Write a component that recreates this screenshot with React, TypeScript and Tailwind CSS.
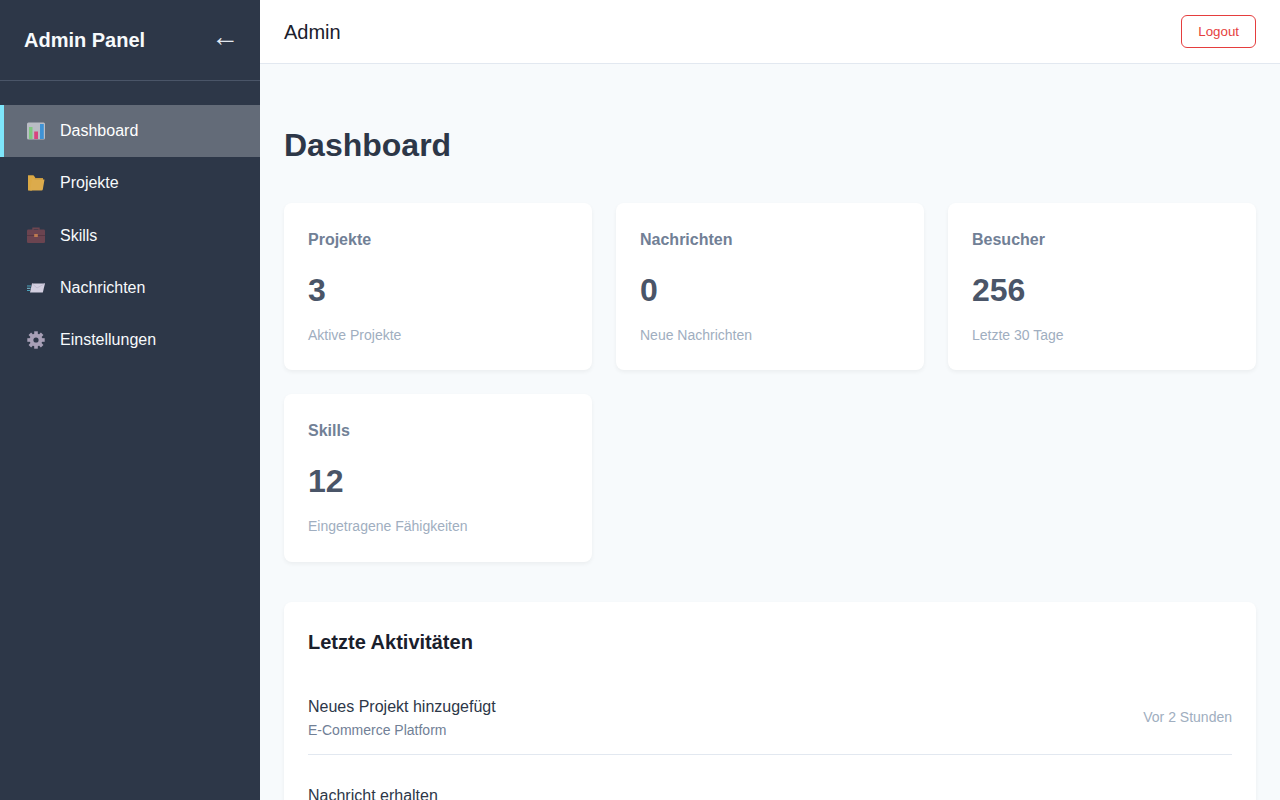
import React from "react";

function ChartIcon() {
  return (
    <svg width="18" height="18" viewBox="0 0 18 18" className="shrink-0">
      <rect x="0" y="0.5" width="18" height="17" rx="1.5" fill="#b9bcc4" />
      <rect x="2" y="5" width="3.5" height="12" fill="#7fc77f" />
      <rect x="7.2" y="9.5" width="3.8" height="7.5" fill="#d8447f" />
      <rect x="13" y="2" width="3.8" height="15" fill="#3f93d6" />
    </svg>
  );
}
function FolderIcon() {
  return (
    <svg width="18" height="18" viewBox="0 0 18 18" className="shrink-0">
      <path d="M1 1.5h5.5l2 2.5H16v4H1z" fill="#c99a3f" />
      <path d="M1 1.5h5.5l1.5 2L5 16.5H1z" fill="#dba945" />
      <path d="M5 5.5h12.5l-1.7 10a1.2 1.2 0 0 1-1.2 1H1.5c1 0 1.4-.5 1.7-1.5z" fill="#dcab4c" />
    </svg>
  );
}
function CaseIcon() {
  return (
    <svg width="18" height="18" viewBox="0 0 18 18" className="shrink-0">
      <path d="M6 4V2.2h6V4" fill="none" stroke="#6e4650" strokeWidth="1.4" />
      <rect x="0" y="3.5" width="18" height="13.5" rx="1.2" fill="#6b4450" />
      <rect x="0" y="9" width="18" height="0.8" fill="#523540" />
      <rect x="7.2" y="8" width="3.6" height="3" fill="#bd7a50" />
    </svg>
  );
}
function MailIcon() {
  return (
    <svg width="18" height="18" viewBox="0 0 18 18" className="shrink-0">
      <path d="M5 4.5h13l-2.2 9H3z" fill="#d3cfe0" />
      <path d="M5 4.5l5 4.5 8-4.5" fill="none" stroke="#b9b4ca" strokeWidth="0.7" />
      <rect x="0" y="6.5" width="4" height="1" fill="#4ba3bd" />
      <rect x="0" y="8.8" width="3.5" height="1" fill="#7cc4d8" />
      <rect x="0" y="11" width="3" height="1" fill="#4ba3bd" />
    </svg>
  );
}
function GearIcon() {
  const teeth = [0, 45, 90, 135, 180, 225, 270, 315];
  return (
    <svg width="18" height="18" viewBox="0 0 18 18" className="shrink-0">
      {teeth.map((a) => (
        <rect key={a} x="7.2" y="0.3" width="3.6" height="4" fill="#a79fb6" transform={`rotate(${a} 9 9)`} />
      ))}
      <circle cx="9" cy="9" r="6.4" fill="#a79fb6" />
      <circle cx="9" cy="9" r="2.6" fill="#2d3748" />
    </svg>
  );
}

const nav = [
  { label: "Dashboard", icon: <ChartIcon />, active: true },
  { label: "Projekte", icon: <FolderIcon /> },
  { label: "Skills", icon: <CaseIcon /> },
  { label: "Nachrichten", icon: <MailIcon /> },
  { label: "Einstellungen", icon: <GearIcon /> },
];

const stats = [
  { title: "Projekte", value: "3", sub: "Aktive Projekte" },
  { title: "Nachrichten", value: "0", sub: "Neue Nachrichten" },
  { title: "Besucher", value: "256", sub: "Letzte 30 Tage" },
  { title: "Skills", value: "12", sub: "Eingetragene Fähigkeiten" },
];

const activities = [
  { title: "Neues Projekt hinzugefügt", sub: "E-Commerce Platform", time: "Vor 2 Stunden" },
  { title: "Nachricht erhalten", sub: "Von Max Mustermann", time: "Vor 5 Stunden" },
];

export default function App() {
  return (
    <div className="flex h-screen overflow-hidden bg-[#f7fafc] font-['Liberation_Sans',Arial,sans-serif] leading-[1.6]">
      <aside className="w-[260px] shrink-0 bg-[#2d3748] text-[#f7fafc]">
        <div className="flex h-[81px] items-center justify-between border-b border-[#4a5568] px-6">
          <h1 className="text-[20px] font-bold">Admin Panel</h1>
          <span className="mr-[-3px] mb-[6px] text-[28px] leading-none text-[#e2e8f0]">←</span>
        </div>
        <nav className="pt-6">
          {nav.map((n) => (
            <a
              key={n.label}
              className={
                n.active
                  ? "flex h-[52.2px] items-center gap-[15px] border-l-4 border-[#7ee6fb] bg-[#636b78] pl-[23px] text-white"
                  : "flex h-[52.2px] items-center gap-[15px] border-l-4 border-transparent pl-[23px] text-[#f7fafc]"
              }
            >
              {n.icon}
              <span>{n.label}</span>
            </a>
          ))}
        </nav>
      </aside>
      <div className="flex min-w-0 flex-1 flex-col">
        <header className="flex h-16 shrink-0 items-center justify-between border-b border-[#e2e8f0] bg-white px-6">
          <span className="text-[20px] text-[#1a202c]">Admin</span>
          <button className="rounded-md border border-[#e53e3e] px-4 py-2 text-[13.33px] leading-[15px] text-[#e53e3e]">
            Logout
          </button>
        </header>
        <main className="min-h-0 flex-1 overflow-hidden px-6 pt-14">
          <h2 className="mb-8 text-[32px] font-bold text-[#2d3748]">Dashboard</h2>
          <div className="mb-10 grid grid-cols-3 gap-6">
            {stats.map((s) => (
              <div key={s.title} className="rounded-lg bg-white p-6 shadow-[0_2px_4px_rgba(0,0,0,0.05)]">
                <h3 className="mb-3 font-bold text-[#718096]">{s.title}</h3>
                <div className="mb-2 text-[32px] font-bold text-[#4a5568]">{s.value}</div>
                <p className="text-[14px] text-[#a0aec0]">{s.sub}</p>
              </div>
            ))}
          </div>
          <section className="rounded-lg bg-white p-6 shadow-[0_2px_4px_rgba(0,0,0,0.05)]">
            <h3 className="mb-6 text-[20px] font-bold text-[#1a202c]">Letzte Aktivitäten</h3>
            <div className="flex flex-col gap-4">
              {activities.map((a) => (
                <div key={a.title} className="flex items-center justify-between border-b border-[#e2e8f0] py-3">
                  <div>
                    <div className="text-[#2d3748]">{a.title}</div>
                    <div className="text-[14px] text-[#718096]">{a.sub}</div>
                  </div>
                  <span className="text-[14px] text-[#a0aec0]">{a.time}</span>
                </div>
              ))}
            </div>
          </section>
        </main>
      </div>
    </div>
  );
}
